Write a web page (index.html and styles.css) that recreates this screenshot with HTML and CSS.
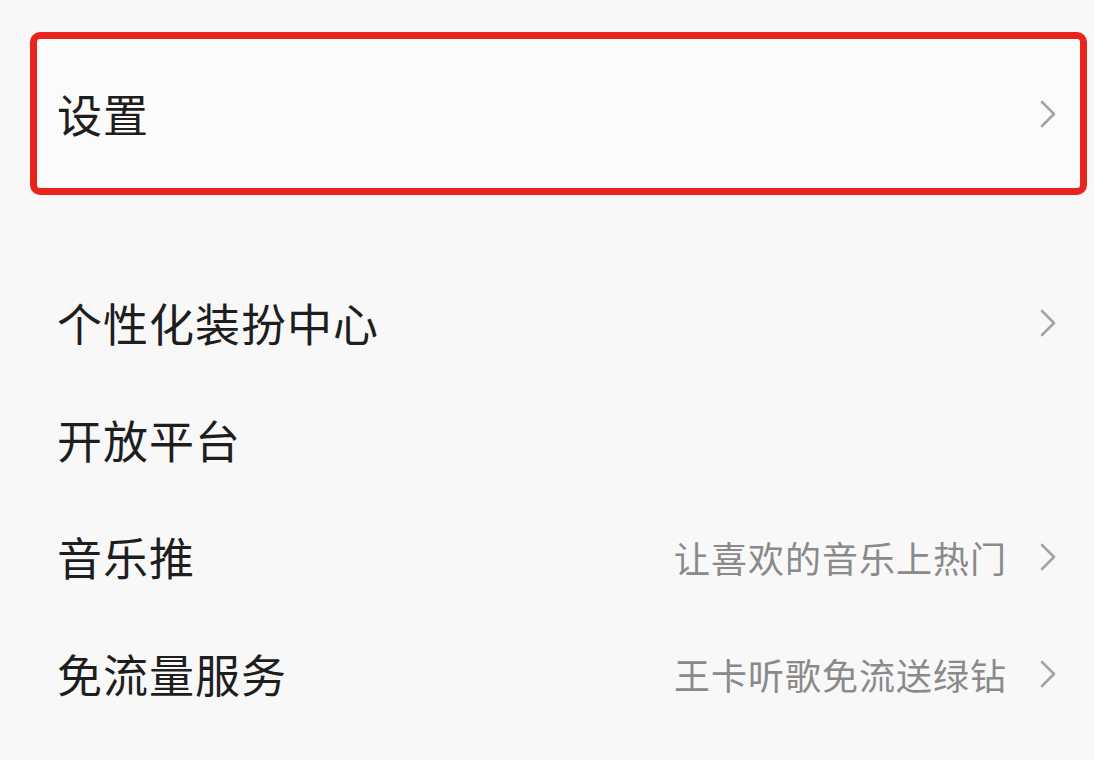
FILE: index.html
```html
<!DOCTYPE html>
<html lang="zh-CN">
<head>
<meta charset="utf-8">
<title>设置</title>
<link rel="stylesheet" href="styles.css">
</head>
<body>
<div class="page">
  <div class="row boxed">
    <span class="label">设置</span>
    <span class="right"><svg class="chev" viewBox="0 0 18 28" width="18" height="28"><path d="M3 2 L15 14 L3 26" fill="none" stroke="#a3a3a3" stroke-width="2.6" stroke-linecap="round" stroke-linejoin="round"/></svg></span>
  </div>
  <div class="list">
    <div class="row">
      <span class="label">个性化装扮中心</span>
      <span class="right"><svg class="chev" viewBox="0 0 18 28" width="18" height="28"><path d="M3 2 L15 14 L3 26" fill="none" stroke="#a3a3a3" stroke-width="2.6" stroke-linecap="round" stroke-linejoin="round"/></svg></span>
    </div>
    <div class="row">
      <span class="label">开放平台</span>
    </div>
    <div class="row">
      <span class="label">音乐推</span>
      <span class="right"><span class="hint">让喜欢的音乐上热门</span><svg class="chev" viewBox="0 0 18 28" width="18" height="28"><path d="M3 2 L15 14 L3 26" fill="none" stroke="#a3a3a3" stroke-width="2.6" stroke-linecap="round" stroke-linejoin="round"/></svg></span>
    </div>
    <div class="row">
      <span class="label">免流量服务</span>
      <span class="right"><span class="hint">王卡听歌免流送绿钻</span><svg class="chev" viewBox="0 0 18 28" width="18" height="28"><path d="M3 2 L15 14 L3 26" fill="none" stroke="#a3a3a3" stroke-width="2.6" stroke-linecap="round" stroke-linejoin="round"/></svg></span>
    </div>
  </div>
</div>
</body>
</html>
```

FILE: styles.css
```css
html, body {
  margin: 0;
  padding: 0;
}
body {
  background: #f8f8f8;
  font-family: "Noto Sans CJK SC", "Noto Sans", sans-serif;
  color: #222222;
  width: 1094px;
  height: 760px;
  overflow: hidden;
}
.page {
  padding-top: 32px;
  display: flex;
  flex-direction: column;
}
.row {
  display: flex;
  align-items: center;
  justify-content: space-between;
  box-sizing: border-box;
  height: 117px;
  padding: 0 37px 0 57px;
}
.row.boxed {
  height: 163px;
  margin: 0 7px 0 30px;
  border: 7px solid #e8241d;
  border-radius: 10px;
  background: #fbfbfb;
  padding: 0 23px 0 20px;
}
.list {
  margin-top: 69px;
  display: flex;
  flex-direction: column;
}
.label {
  font-size: 45px;
  line-height: 1;
  color: #1e1e1e;
  letter-spacing: 1px;
}
.right {
  display: flex;
  align-items: center;
  gap: 32px;
}
.hint {
  font-size: 36px;
  line-height: 1;
  color: #8a8a8a;
  letter-spacing: 1px;
}
.chev {
  display: block;
}
```
